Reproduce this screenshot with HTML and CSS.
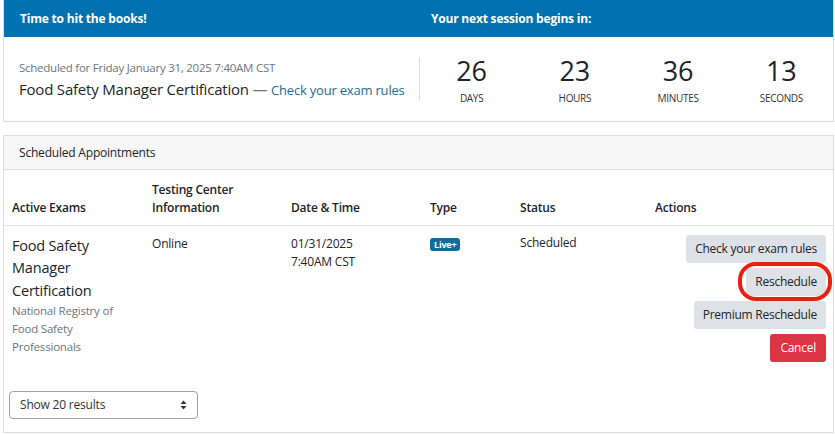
FILE: index.html
```html
<!DOCTYPE html>
<html>
<head>
<meta charset="utf-8">
<link rel="stylesheet" href="styles.css">
</head>
<body>
<div class="page">
  <section class="card countdown-card">
    <div class="cd-head">
      <div class="cd-head-left">Time to hit the books!</div>
      <div class="cd-head-right">Your next session begins in:</div>
    </div>
    <div class="cd-body">
      <div class="cd-info">
        <div class="cd-when">Scheduled for Friday January 31, 2025 7:40AM CST</div>
        <div class="cd-title">Food Safety Manager Certification <span class="dash">—</span> <a class="link">Check your exam rules</a></div>
      </div>
      <div class="cd-timer">
        <div class="unit"><div class="num">26</div><div class="lbl">DAYS</div></div>
        <div class="unit"><div class="num">23</div><div class="lbl">HOURS</div></div>
        <div class="unit"><div class="num">36</div><div class="lbl">MINUTES</div></div>
        <div class="unit"><div class="num">13</div><div class="lbl">SECONDS</div></div>
      </div>
    </div>
  </section>

  <section class="card appt-card">
    <div class="appt-head">Scheduled Appointments</div>
    <table class="appt-table">
      <thead>
        <tr>
          <th class="c1">Active Exams</th>
          <th class="c2">Testing Center<br>Information</th>
          <th class="c3">Date &amp; Time</th>
          <th class="c4">Type</th>
          <th class="c5">Status</th>
          <th class="c6">Actions</th>
        </tr>
      </thead>
      <tbody>
        <tr>
          <td class="c1">
            <div class="exam-name">Food Safety<br>Manager<br>Certification</div>
            <div class="exam-org">National Registry of<br>Food Safety<br>Professionals</div>
          </td>
          <td class="c2">Online</td>
          <td class="c3">01/31/2025<br>7:40AM CST</td>
          <td class="c4"><span class="badge">Live+</span></td>
          <td class="c5">Scheduled</td>
          <td class="c6">
            <div class="actions">
              <button class="btn">Check your exam rules</button>
              <span class="circled"><button class="btn">Reschedule</button></span>
              <button class="btn">Premium Reschedule</button>
              <button class="btn btn-danger">Cancel</button>
            </div>
          </td>
        </tr>
      </tbody>
    </table>
    <div class="footer">
      <div class="select">Show 20 results<span class="caret"><svg width="7" height="10" viewBox="0 0 7 10"><path d="M3.5 0.5 L6.5 4 H0.5 Z M3.5 9.5 L6.5 6 H0.5 Z" fill="#333"/></svg></span></div>
    </div>
  </section>
</div>
</body>
</html>
```

FILE: styles.css
```css
* { box-sizing: border-box; }
html, body { margin: 0; padding: 0; background: #fff; }
body {
  font-family: "Open Sans", "Noto Sans", sans-serif;
  color: #212529;
  width: 835px;
  height: 434px;
  overflow: hidden;
}
.page { padding: 0 1px 0 3px; }

.card {
  border: 1px solid #dcdcdc;
  background: #fff;
}

.countdown-card { border-top: none; }
.cd-head {
  display: flex;
  background: #0072b2;
  color: #fff;
  font-weight: 700;
  font-size: 12px;
  height: 37px;
  align-items: center;
  letter-spacing: -0.2px;
}
.cd-head-left { width: 427px; padding-left: 16px; }
.cd-head-right { flex: 1; }

.cd-body {
  display: flex;
  align-items: center;
  height: 84px;
}
.cd-info { width: 415px; padding-left: 15px; }
.cd-when { font-size: 11.5px; color: #6c757d; letter-spacing: -0.25px; margin-bottom: 4px; }
.cd-title { font-size: 15px; color: #212529; letter-spacing: -0.2px; }
.dash { color: #6c757d; }
.link { color: #1b6d93; font-size: 13px; letter-spacing: -0.2px; }

.cd-timer {
  flex: 1;
  display: flex;
  border-left: 1px solid #d8d8d8;
  height: 42px;
  align-items: center;
}
.unit { flex: 1; text-align: center; padding-top: 3px; }
.num { font-size: 27px; line-height: 28px; font-weight: 500; color: #212529; }
.lbl { font-size: 10px; line-height: 12px; color: #333; margin-top: 7px; letter-spacing: -0.3px; }

.appt-card { margin-top: 13px; height: 298px; }
.appt-head {
  background: #f7f7f7;
  border-bottom: 1px solid #dcdcdc;
  height: 34px;
  display: flex;
  align-items: center;
  padding-left: 15px;
  font-size: 12px;
  letter-spacing: -0.2px;
}

.appt-table {
  width: 100%;
  border-collapse: collapse;
  font-size: 12px;
  letter-spacing: -0.2px;
}
.appt-table th {
  text-align: left;
  vertical-align: bottom;
  font-weight: 600;
  padding: 8px 8px 8px 8px;
  height: 55px;
  line-height: 18px;
  border-bottom: 1px solid #e2e2e2;
}
.appt-table td {
  vertical-align: top;
  padding: 8px 8px 8px 8px;
  line-height: 18px;
}
.c1 { width: 140px; }
.c2 { width: 139px; }
.c3 { width: 139px; }
.c4 { width: 90px; }
.c5 { width: 135px; }
.appt-table td.c1, .appt-table td.c2, .appt-table td.c3 { padding-top: 9px; }
.exam-name { font-size: 14.5px; line-height: 22.5px; color: #212529; }
.exam-org { font-size: 11.5px; line-height: 18px; color: #6c757d; }

.badge {
  display: inline-block;
  background: #0d6e9f;
  color: #fff;
  font-size: 9px;
  font-weight: 700;
  line-height: 13px;
  padding: 0 4px;
  border-radius: 3px;
  margin-top: 4px;
}

.actions {
  display: flex;
  flex-direction: column;
  align-items: flex-end;
  gap: 5px;
  margin-right: -1px;
  padding-top: 1px;
}
.btn {
  font-family: inherit;
  font-size: 12px;
  letter-spacing: -0.25px;
  border: none;
  border-radius: 3px;
  background: #dee1e5;
  color: #212529;
  height: 28px;
  padding: 0 9px;
}
.btn-danger { background: #dc3545; color: #fff; padding: 0 10px; }
.circled { position: relative; display: inline-flex; }
.circled::after {
  content: "";
  position: absolute;
  left: -8px; right: -6px; top: -6px; bottom: -5px;
  border: 4px solid #e8200c;
  border-radius: 18px;
}

.footer { padding: 21px 0 0 5px; }
.select {
  width: 189px;
  height: 28px;
  border: 1px solid #a0a0a0;
  border-radius: 4px;
  display: flex;
  align-items: center;
  justify-content: space-between;
  padding: 0 10px;
  font-size: 12px;
  color: #333;
  letter-spacing: -0.2px;
}
.caret { display: flex; }
```
